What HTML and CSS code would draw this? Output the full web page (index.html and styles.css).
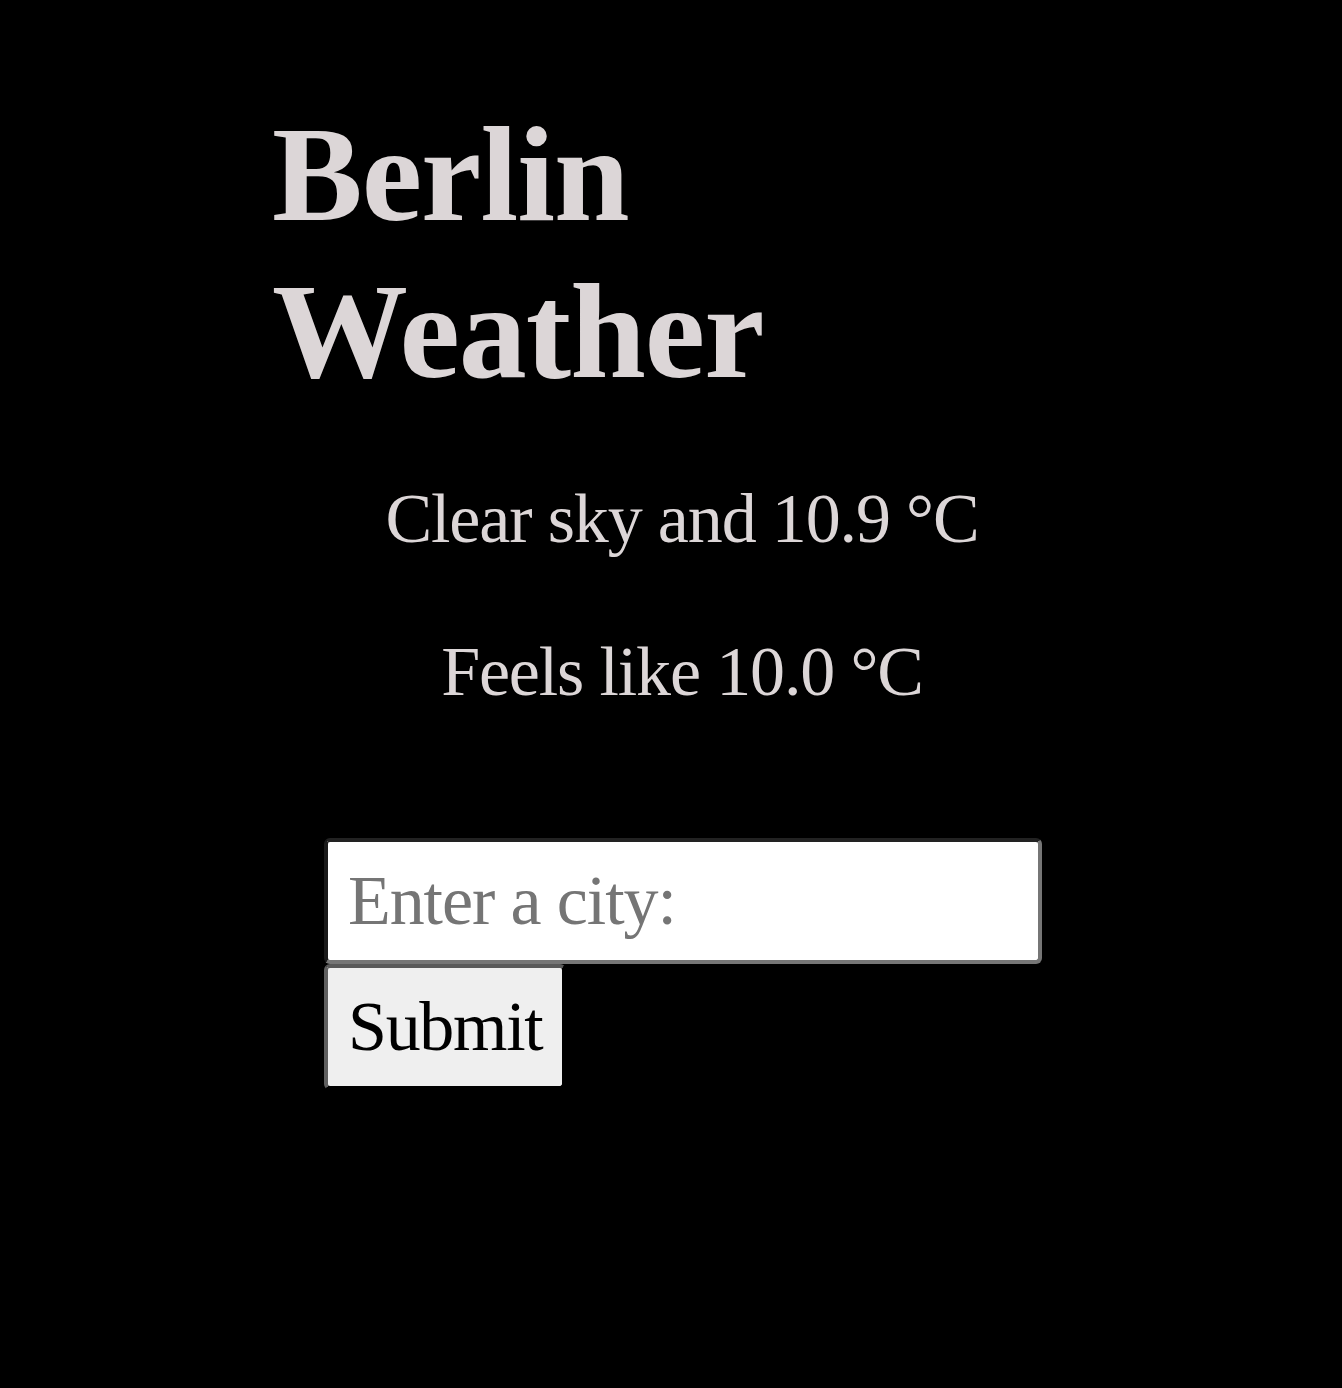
FILE: index.html
```html
<!DOCTYPE html>
<html lang="en">
<head>
<meta charset="utf-8">
<title>Berlin Weather</title>
<link rel="stylesheet" href="styles.css">
</head>
<body>
<main class="app">
  <h1 class="title">Berlin Weather</h1>
  <p class="line">Clear sky and 10.9 °C</p>
  <p class="line">Feels like 10.0 °C</p>
  <form class="search">
    <input class="city" type="text" placeholder="Enter a city:">
    <button class="submit" type="submit">Submit</button>
  </form>
</main>
</body>
</html>
```

FILE: styles.css
```css
html, body {
  margin: 0;
  padding: 0;
  background: #000;
}

body {
  font-family: "Liberation Serif", "Times New Roman", serif;
  color: #dcd6d7;
  min-height: 1388px;
}

.app {
  width: 820px;
  margin-left: 272px;
  padding-top: 96px;
}

.title {
  margin: 0;
  font-size: 136px;
  font-weight: bold;
  line-height: 157px;
  letter-spacing: -1px;
  color: #dcd6d7;
}

.line {
  margin: 69px 0 0;
  font-size: 70px;
  letter-spacing: -1.15px;
  text-align: center;
}

.line + .line {
  margin-top: 73px;
}

.search {
  width: 718px;
  margin: 126px 0 0 52px;
  display: flex;
  flex-direction: column;
  align-items: flex-start;
}

.city {
  box-sizing: border-box;
  width: 100%;
  margin: 0;
  padding: 19px 20px;
  font-family: "Liberation Serif", "Times New Roman", serif;
  font-size: 70px;
  letter-spacing: -1.1px;
  color: #000;
  background: #fff;
  border-width: 4px;
  border-style: solid;
  border-color: #222 #767676 #767676 #1a1a1a;
  border-radius: 6px;
  outline: none;
}

.city::placeholder {
  color: #757575;
}

.submit {
  margin: 0;
  padding: 19px 20px;
  font-family: "Liberation Serif", "Times New Roman", serif;
  font-size: 70px;
  letter-spacing: -1.3px;
  color: #000;
  background: #efefef;
  border-width: 4px;
  border-style: solid;
  border-color: #5a5a5a #000 #000 #5f5f5f;
  border-radius: 6px;
}
```
